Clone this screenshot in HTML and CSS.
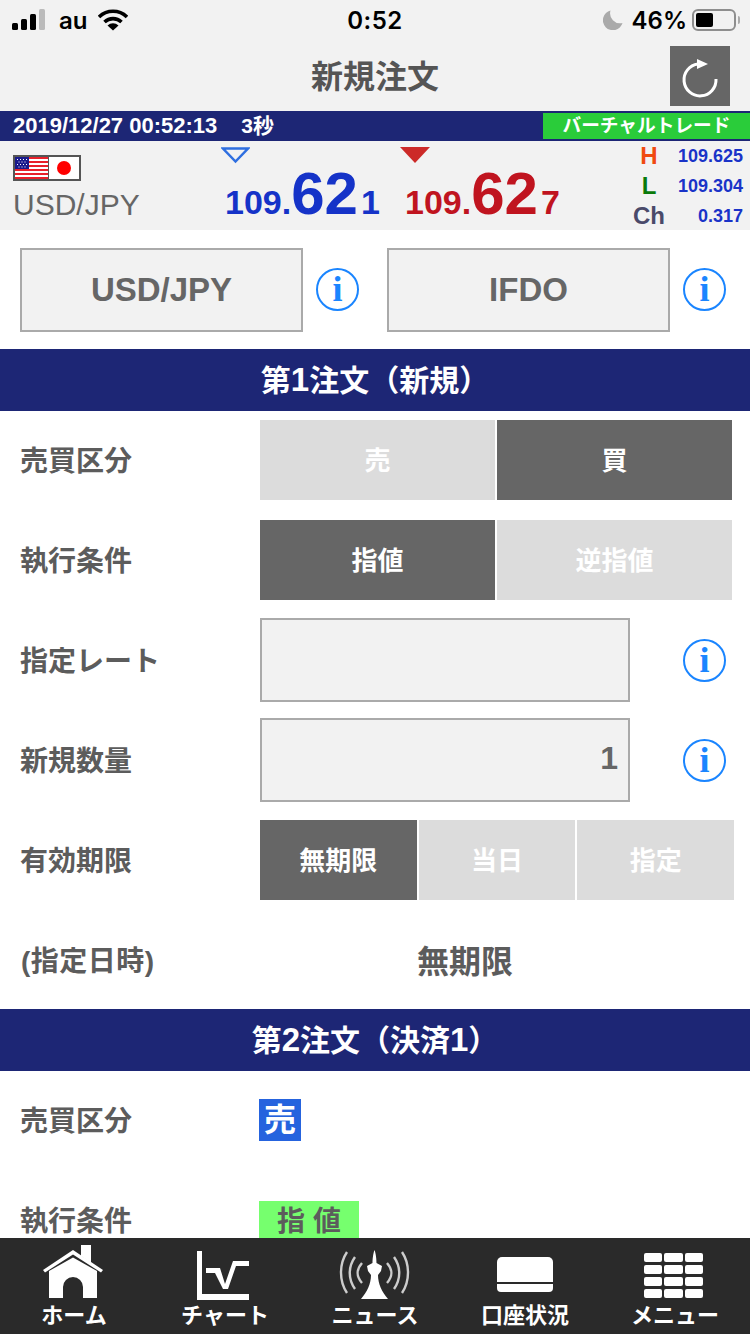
FILE: index.html
```html
<!DOCTYPE html>
<html lang="ja">
<head>
    <meta charset="UTF-8">
    <meta name="viewport" content="width=device-width, initial-scale=1.0">
    <title>新規注文</title>
    <link rel="stylesheet" href="styles.css">
</head>
<body>
<div class="page">
    <div class="statusbar">
        <div class="status-left">
            <svg class="signal" width="34" height="22" viewBox="0 0 34 22">
                <rect x="0" y="14" width="6" height="7" rx="1.5" fill="#000"/>
                <rect x="9" y="10" width="6" height="11" rx="1.5" fill="#000"/>
                <rect x="18" y="5" width="6" height="16" rx="1.5" fill="#000"/>
                <rect x="27" y="0" width="6" height="21" rx="1.5" fill="#bbb"/>
            </svg>
            <span class="carrier">au</span>
            <svg class="wifi" width="30" height="22" viewBox="0 0 30 22">
                <path d="M1 8 A20 20 0 0 1 29 8" fill="none" stroke="#000" stroke-width="3.6"/>
                <path d="M6.5 13 A12.5 12.5 0 0 1 23.5 13" fill="none" stroke="#000" stroke-width="3.6"/>
                <path d="M15 21.5 L9.5 16.5 A8 8 0 0 1 20.5 16.5 Z" fill="#000"/>
            </svg>
        </div>
        <div class="status-time">0:52</div>
        <div class="status-right">
            <svg class="moon" width="20" height="20" viewBox="0 0 20 20">
                <path d="M7.5 0.5 A10 10 0 1 0 19.5 13 A10 10 0 0 1 7.5 0.5 Z" fill="#aaa"/>
            </svg>
            <span class="battery-text">46%</span>
            <div class="battery"><div class="battery-fill"></div></div>
            <div class="battery-cap"></div>
        </div>
    </div>

    <div class="navbar">
        <h1 class="nav-title">新規注文</h1>
        <button class="refresh" type="button">
            <svg width="60" height="60" viewBox="0 0 60 60">
                <path d="M28 18 A16 16 0 1 0 46 33" fill="none" stroke="#fff" stroke-width="3"/>
                <path d="M27 13 L38 18 L27 23 Z" fill="#fff"/>
            </svg>
        </button>
    </div>

    <div class="timebar">
        <span class="timebar-date">2019/12/27 00:52:13</span>
        <span class="timebar-sec">3秒</span>
        <span class="virtual">バーチャルトレード</span>
    </div>

    <div class="rates">
        <div class="pair">
            <div class="flags">
                <svg class="flag" width="33" height="22" viewBox="0 0 33 22">
                    <rect width="33" height="22" fill="#fff"/>
                    <rect y="0" width="33" height="2" fill="#e8202a"/>
                    <rect y="4" width="33" height="2" fill="#e8202a"/>
                    <rect y="8" width="33" height="2" fill="#e8202a"/>
                    <rect y="12" width="33" height="2" fill="#e8202a"/>
                    <rect y="16" width="33" height="2" fill="#e8202a"/>
                    <rect y="20" width="33" height="2" fill="#e8202a"/>
                    <rect width="14" height="12" fill="#1a1a8c"/>
                    <path d="M2 2h1v1H2zM5 2h1v1H5zM8 2h1v1H8zM11 2h1v1h-1zM3.500 4.500h1v1h-1zM6.500 4.500h1v1h-1zM9.500 4.500h1v1h-1zM2 7h1v1H2zM5 7h1v1H5zM8 7h1v1H8zM11 7h1v1h-1zM3.500 9.500h1v1h-1zM6.500 9.500h1v1h-1zM9.500 9.500h1v1h-1z" fill="#fff"/>
                </svg>
                <div class="flag-jp"><div class="flag-sun"></div></div>
            </div>
            <div class="pair-name">USD/JPY</div>
        </div>
        <div class="quote quote-bid">
            <svg class="quote-arrow" width="29" height="17" viewBox="0 0 29 17">
                <path d="M2 1.500 H27 L14.500 14.500 Z" fill="none" stroke="#2f6fe0" stroke-width="2.5"/>
            </svg>
            <div class="quote-price"><span class="price-s">109.</span><span class="price-l">62</span><span class="price-s price-last">1</span></div>
        </div>
        <div class="quote quote-ask">
            <svg class="quote-arrow" width="30" height="17" viewBox="0 0 30 17">
                <path d="M0 0 H30 L15 16 Z" fill="#cc2a28"/>
            </svg>
            <div class="quote-price"><span class="price-s">109.</span><span class="price-l">62</span><span class="price-s price-last">7</span></div>
        </div>
        <div class="hilo">
            <span class="hilo-key key-h">H</span><span class="hilo-val">109.625</span>
            <span class="hilo-key key-l">L</span><span class="hilo-val">109.304</span>
            <span class="hilo-key key-c">Ch</span><span class="hilo-val">0.317</span>
        </div>
    </div>

    <div class="content">
        <div class="selectors">
            <div class="select-box">USD/JPY</div>
            <span class="info info-select">i</span>
            <div class="select-box">IFDO</div>
            <span class="info info-select">i</span>
        </div>

        <h2 class="section-head">第<b class="num">1</b>注文（新規）</h2>
        <div class="section">
            <div class="row">
                <span class="row-label">売買区分</span>
                <div class="toggle toggle-2">
                    <span class="btn">売</span>
                    <span class="btn btn-on">買</span>
                </div>
            </div>
            <div class="row">
                <span class="row-label">執行条件</span>
                <div class="toggle toggle-2">
                    <span class="btn btn-on">指値</span>
                    <span class="btn">逆指値</span>
                </div>
            </div>
            <div class="row">
                <span class="row-label">指定レート</span>
                <div class="field"></div>
                <span class="info info-field">i</span>
            </div>
            <div class="row">
                <span class="row-label">新規数量</span>
                <div class="field">1</div>
                <span class="info info-field">i</span>
            </div>
            <div class="row">
                <span class="row-label">有効期限</span>
                <div class="toggle toggle-3">
                    <span class="btn btn-on">無期限</span>
                    <span class="btn">当日</span>
                    <span class="btn">指定</span>
                </div>
            </div>
            <div class="row">
                <span class="row-label row-label-date">(指定日時)</span>
                <span class="row-value">無期限</span>
            </div>
        </div>

        <h2 class="section-head">第<b class="num">2</b>注文（決済<b class="num">1</b>）</h2>
        <div class="section">
            <div class="row">
                <span class="row-label">売買区分</span>
                <span class="badge-sell">売</span>
            </div>
            <div class="row">
                <span class="row-label">執行条件</span>
                <span class="badge-limit">指 値</span>
            </div>
        </div>
    </div>

    <div class="tabbar">
        <div class="tab">
            <svg width="64" height="56" viewBox="2 0 64 56">
                <path d="M40 1 H50 V19 L40 12 Z" fill="#fff"/>
                <path d="M2 26 L32 6 L62 26 L60 28.500 L32 10.500 L4 28.500 Z" fill="#fff"/>
                <path d="M8 27 L32 13.500 L56 27 V54 H42 V43 A10 10 0 0 0 22 43 V54 H8 Z" fill="#fff"/>
            </svg>
            <span class="tab-label">ホーム</span>
        </div>
        <div class="tab">
            <svg width="64" height="56" viewBox="5 0 64 56">
                <path d="M9 7 H14 V50 H61 V56 H9 Z" fill="#fff"/>
                <path d="M18 24 H32 L37 40 L45 17 H61 V22 H48 L40 45 H35 L27 29 H18 Z" fill="#fff"/>
            </svg>
            <span class="tab-label">チャート</span>
        </div>
        <div class="tab">
            <svg width="76" height="56" viewBox="0 0 76 56">
                <path d="M37.500 6 C36 10 35.500 16 35.500 19 L30 22 L31 27 L34 31 C34 40 30 48 24 55 H51 C45 48 41 40 41 31 L44 27 L45 22 L39.500 19 C39.500 16 39 10 37.500 6 Z" fill="#fff"/>
                <g fill="none" stroke="#ccc" stroke-width="2.4">
                    <path d="M10 8 C2 20 2 37 10 49"/>
                    <path d="M18 13 C11 23 11 35 18 45"/>
                    <path d="M25 19 C19 26 19 32 25 39"/>
                    <path d="M65 8 C73 20 73 37 65 49"/>
                    <path d="M57 13 C64 23 64 35 57 45"/>
                    <path d="M50 19 C56 26 56 32 50 39"/>
                </g>
            </svg>
            <span class="tab-label">ニュース</span>
        </div>
        <div class="tab">
            <svg width="64" height="56" viewBox="0 0 64 56">
                <path d="M4 18 A5 5 0 0 1 9 13 H55 A5 5 0 0 1 60 18 V38 H4 Z" fill="#fff"/>
                <path d="M4 40 H60 V44 A4 4 0 0 1 56 48 H8 A4 4 0 0 1 4 44 Z" fill="#fff"/>
            </svg>
            <span class="tab-label">口座状況</span>
        </div>
        <div class="tab">
            <div class="menu-grid">
                <i></i><i></i><i></i><i></i><i></i><i></i>
                <i></i><i></i><i></i><i></i><i></i><i></i>
            </div>
            <span class="tab-label">メニュー</span>
        </div>
    </div>
</div>
</body>
</html>
```

FILE: styles.css
```css
* {
    box-sizing: border-box;
}

html, body {
    margin: 0;
    padding: 0;
}

body {
    font-family: "Liberation Sans", "Noto Sans CJK JP", sans-serif;
    color: #5c5c5c;
    background-color: #fff;
}

.page {
    width: 750px;
    height: 1334px;
    display: flex;
    flex-direction: column;
    overflow: hidden;
}

/* status bar */
.statusbar {
    height: 44px;
    flex: none;
    background-color: #f2f2f2;
    display: flex;
    align-items: center;
    justify-content: space-between;
    color: #000;
    font-family: Inter, "Liberation Sans", sans-serif;
    font-weight: 600;
    padding-bottom: 4px;
}

.status-left {
    width: 200px;
    display: flex;
    align-items: center;
    padding-left: 12px;
}

.carrier {
    font-size: 24px;
    margin-left: 13px;
    margin-right: 11px;
}

.status-time {
    font-size: 24px;
    letter-spacing: 0.5px;
}

.status-right {
    width: 200px;
    display: flex;
    align-items: center;
    justify-content: flex-end;
    padding-right: 10px;
}

.moon {
    margin-right: 9px;
}

.battery-text {
    font-size: 24px;
    margin-right: 5px;
}

.battery {
    width: 44px;
    height: 22px;
    border: 2px solid #8e8e8e;
    border-radius: 6px;
    padding: 2px;
}

.battery-fill {
    width: 17px;
    height: 14px;
    background-color: #000;
    border-radius: 2px;
}

.battery-cap {
    width: 2px;
    height: 8px;
    margin-left: 2px;
    background-color: #aaa;
    border-radius: 0 2px 2px 0;
}

/* nav */
.navbar {
    height: 67px;
    flex: none;
    background-color: #f2f2f2;
    display: flex;
    align-items: flex-start;
    justify-content: center;
    position: relative;
}

.nav-title {
    margin: 10px 0 0;
    font-size: 32px;
    line-height: 46px;
    font-weight: 700;
    color: #555;
}

.refresh {
    position: absolute;
    right: 20px;
    top: 2px;
    width: 60px;
    height: 60px;
    padding: 0;
    border: none;
    background-color: #666;
    display: block;
}

.refresh svg {
    display: block;
}

/* time bar */
.timebar {
    height: 30px;
    flex: none;
    background-color: #1d2675;
    color: #fff;
    display: flex;
    align-items: center;
    padding: 2px 0 2px 13px;
    font-weight: 700;
    font-size: 22px;
}

.timebar-date {
    margin-bottom: 1px;
}

.timebar-sec {
    margin-left: 24px;
    margin-bottom: 5px;
    font-size: 21px;
}

.virtual {
    margin-left: auto;
    width: 207px;
    height: 26px;
    background-color: #2acc3a;
    font-size: 18.700px;
    line-height: 26px;
    text-align: center;
}

/* rates */
.rates {
    height: 89px;
    flex: none;
    background-color: #f2f2f2;
    display: flex;
    position: relative;
}

.pair {
    width: 225px;
    padding: 14px 0 0 13px;
}

.flags {
    display: flex;
    width: 68px;
    height: 26px;
    border: 2px solid #555;
    background-color: #555;
    gap: 1px;
}

.flag {
    display: block;
    flex: none;
}

.flag-jp {
    flex: 1;
    background-color: #fff;
    display: flex;
    align-items: center;
    justify-content: center;
}

.flag-sun {
    width: 14px;
    height: 14px;
    border-radius: 50%;
    background-color: #f00;
}

.pair-name {
    font-size: 30px;
    line-height: 36px;
    margin-top: 6px;
    color: #666;
}

.quote {
    width: 180px;
    padding-top: 6px;
}

.quote-arrow {
    display: block;
    margin-left: -4px;
}

.quote-ask .quote-arrow {
    margin-left: -5px;
}

.quote-price {
    font-weight: 700;
    line-height: 60px;
    margin-top: 0;
    white-space: nowrap;
}

.quote-bid {
    color: #1533c8;
}

.quote-ask {
    color: #c0141f;
}

.price-s {
    font-size: 34px;
}

.price-l {
    font-size: 60px;
}

.price-last {
    margin-left: 3px;
}

.hilo {
    width: 125px;
    flex: none;
    margin-left: auto;
    display: grid;
    grid-template-columns: 48px 1fr;
    grid-auto-rows: 30px;
    align-items: center;
    padding: 0 7px 0 0;
    font-weight: 700;
}

.hilo-key {
    font-size: 24px;
    text-align: center;
}

.hilo-val {
    font-size: 18px;
    text-align: right;
    color: #1a33c8;
}

.key-h {
    color: #f04a10;
}

.key-l {
    color: #0a7a0a;
}

.key-c {
    color: #4a4a6a;
}

/* content */
.content {
    flex: 1;
    min-height: 0;
    overflow: hidden;
}

.selectors {
    height: 119px;
    display: flex;
    align-items: center;
    padding-left: 20px;
}

.select-box {
    width: 283px;
    height: 84px;
    flex: none;
    border: 2px solid #aaa;
    background-color: #f2f2f2;
    font-size: 33px;
    font-weight: 700;
    color: #666;
    display: flex;
    align-items: center;
    justify-content: center;
}

.info {
    width: 43px;
    height: 43px;
    flex: none;
    border: 2px solid #1a85ff;
    border-radius: 50%;
    color: #1a85ff;
    font-family: "Liberation Serif", serif;
    font-weight: 700;
    font-size: 36px;
    line-height: 39px;
    text-align: center;
}

.info-select {
    margin-left: 13px;
}

.info-select + .select-box {
    margin-left: 28px;
}

.info-field {
    margin-left: 53px;
}

.section-head {
    margin: 0;
    height: 62px;
    background-color: #1d2675;
    color: #fff;
    font-size: 30px;
    line-height: 62px;
    font-weight: 700;
    text-align: center;
}

.num {
    font-size: 33px;
}

.section {
    display: flex;
    flex-direction: column;
    gap: 20px;
    padding: 9px 0;
}

.row {
    height: 80px;
    display: flex;
    align-items: center;
    padding-left: 20px;
}

.row-label {
    width: 240px;
    flex: none;
    padding-bottom: 2px;
    font-size: 28px;
    font-weight: 700;
    color: #5c5c5c;
}

.row-label-date {
    padding-left: 1px;
    letter-spacing: 0.500px;
}

.toggle {
    display: flex;
    gap: 2px;
    height: 80px;
}

.toggle-2 {
    width: 472px;
}

.toggle-3 {
    width: 474px;
}

.btn {
    flex: 1;
    background-color: #dcdcdc;
    color: #fff;
    padding-bottom: 3px;
    font-size: 26px;
    font-weight: 700;
    display: flex;
    align-items: center;
    justify-content: center;
}

.btn-on {
    background-color: #666;
}

.field {
    width: 370px;
    height: 84px;
    flex: none;
    border: 2px solid #aaa;
    background-color: #f2f2f2;
    font-size: 32px;
    font-weight: 700;
    color: #666;
    line-height: 76px;
    text-align: right;
    padding-right: 10px;
}

.row-value {
    width: 410px;
    padding-bottom: 3px;
    text-align: center;
    font-size: 32px;
    font-weight: 700;
    color: #5c5c5c;
}

.badge-sell {
    width: 42px;
    height: 42px;
    margin-left: -1px;
    background-color: #2563de;
    color: #fff;
    font-size: 32px;
    line-height: 42px;
    text-align: center;
    font-weight: 700;
}

.badge-limit {
    width: 100px;
    height: 42px;
    margin-left: -1px;
    margin-top: 4px;
    background-color: #76ff6e;
    color: #5c5c5c;
    font-size: 28px;
    line-height: 42px;
    text-align: center;
    font-weight: 700;
}

/* tab bar */
.tabbar {
    height: 96px;
    flex: none;
    background-color: #2a2a2a;
    display: flex;
}

.tab {
    width: 150px;
    display: flex;
    flex-direction: column;
    align-items: center;
    padding-top: 6px;
    color: #fff;
}

.tab svg {
    display: block;
    height: 56px;
}

.tab-label {
    font-size: 22px;
    font-weight: 700;
    line-height: 30px;
    margin-top: 1px;
    white-space: nowrap;
}

.tab:first-child .tab-label {
    margin-left: -2px;
}

.menu-grid {
    width: 60px;
    height: 56px;
    margin-left: -3px;
    display: grid;
    grid-template-columns: repeat(3, 1fr);
    grid-template-rows: repeat(4, 1fr);
    gap: 3px 2px;
    padding: 9px 0 2px;
}

.menu-grid i {
    background-color: #fff;
    border-radius: 2px;
}
```
